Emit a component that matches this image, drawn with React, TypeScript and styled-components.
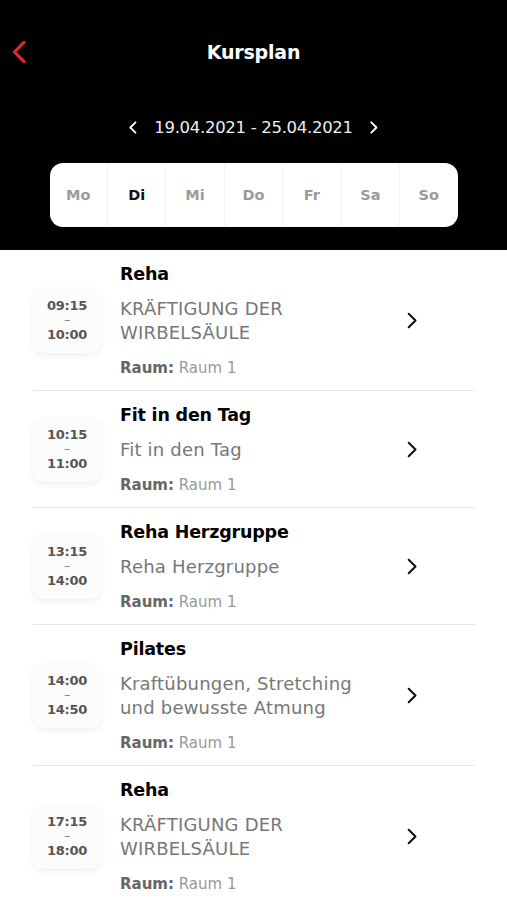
import React, { useState } from "react";
import styled, { createGlobalStyle } from "styled-components";

const GlobalStyle = createGlobalStyle`
  html, body {
    margin: 0;
    padding: 0;
    background: #ffffff;
  }
  body {
    font-family: "DejaVu Sans", "Open Sans", sans-serif;
  }
`;

const Page = styled.div`
  width: 507px;
  min-height: 900px;
  background: #ffffff;
  overflow: hidden;
`;

const Header = styled.header`
  background: #000000;
  height: 250px;
  box-sizing: border-box;
  padding-top: 36px;
  display: flex;
  flex-direction: column;
  align-items: center;
`;

const TopBar = styled.div`
  width: 100%;
  height: 32px;
  display: grid;
  grid-template-columns: 60px 1fr 60px;
  align-items: center;
`;

const BackButton = styled.button`
  background: none;
  border: none;
  padding: 0 0 0 12px;
  display: flex;
  align-items: center;
  cursor: pointer;
`;

const Title = styled.h1`
  margin: 0;
  text-align: center;
  color: #ffffff;
  font-size: 19px;
  font-weight: 700;
  letter-spacing: -0.2px;
`;

const WeekRow = styled.div`
  margin-top: 50px;
  display: flex;
  align-items: center;
  gap: 17px;
  color: #eeeeee;
`;

const WeekArrow = styled.button`
  background: none;
  border: none;
  padding: 0;
  display: flex;
  cursor: pointer;
`;

const WeekLabel = styled.span`
  font-size: 16.5px;
  font-weight: 400;
  letter-spacing: -0.3px;
`;

const DayBar = styled.div`
  margin-top: 26px;
  width: 408px;
  height: 64px;
  background: #ffffff;
  border-radius: 13px;
  display: flex;
  overflow: hidden;
`;

const Day = styled.button<{ $active?: boolean }>`
  flex: 1;
  border: none;
  background: transparent;
  border-left: 1px solid #f1f1f1;
  font-family: inherit;
  font-size: 14.5px;
  font-weight: 700;
  color: ${(p) => (p.$active ? "#111111" : "#9b9b9b")};
  cursor: pointer;

  &:first-child {
    border-left: none;
  }
`;

const List = styled.ul`
  list-style: none;
  margin: 0;
  padding: 0 32px 0 33px;
`;

const Row = styled.li`
  display: flex;
  align-items: center;
  border-bottom: 1px solid #e6e6e6;
  padding: 12px 0 11px;
`;

const TimeBox = styled.div`
  width: 68px;
  height: 64px;
  flex-shrink: 0;
  border-radius: 10px;
  background: #fcfcfc;
  box-shadow: 0 2px 6px rgba(0, 0, 0, 0.07);
  display: flex;
  flex-direction: column;
  align-items: center;
  justify-content: center;
  color: #555555;
  font-size: 13px;
  font-weight: 700;
  line-height: 14.5px;
  letter-spacing: -0.3px;
`;

const Dash = styled.span`
  color: #888888;
  font-weight: 400;
`;

const Body = styled.div`
  flex: 1;
  margin-left: 19px;
  display: flex;
  flex-direction: column;
`;

const CourseName = styled.div`
  font-size: 17.5px;
  line-height: 24px;
  font-weight: 700;
  color: #000000;
  letter-spacing: -0.2px;
`;

const CourseText = styled.div`
  margin-top: 11px;
  font-size: 18px;
  line-height: 24px;
  color: #777777;
  max-width: 250px;
  letter-spacing: 0.2px;
`;

const Room = styled.div`
  margin-top: 12px;
  font-size: 15px;
  line-height: 22px;
  color: #999999;

  b {
    color: #666666;
    font-weight: 700;
  }
`;

const Go = styled.div`
  width: 68px;
  flex-shrink: 0;
  display: flex;
  justify-content: flex-start;
`;

const Chevron = ({ dir, color, size, stroke }: { dir: "l" | "r"; color: string; size: number; stroke: number }) => (
  <svg width={size * 0.6} height={size} viewBox="0 0 12 20" fill="none">
    <path
      d={dir === "l" ? "M10 2 L2 10 L10 18" : "M2 2 L10 10 L2 18"}
      stroke={color}
      strokeWidth={stroke}
      strokeLinecap="round"
      strokeLinejoin="round"
    />
  </svg>
);

const days = ["Mo", "Di", "Mi", "Do", "Fr", "Sa", "So"];

const courses = [
  { from: "09:15", to: "10:00", name: "Reha", text: "KRÄFTIGUNG DER WIRBELSÄULE", room: "Raum 1" },
  { from: "10:15", to: "11:00", name: "Fit in den Tag", text: "Fit in den Tag", room: "Raum 1" },
  { from: "13:15", to: "14:00", name: "Reha Herzgruppe", text: "Reha Herzgruppe", room: "Raum 1" },
  { from: "14:00", to: "14:50", name: "Pilates", text: "Kraftübungen, Stretching und bewusste Atmung", room: "Raum 1" },
  { from: "17:15", to: "18:00", name: "Reha", text: "KRÄFTIGUNG DER WIRBELSÄULE", room: "Raum 1" },
];

export default function App() {
  const [day, setDay] = useState("Di");

  return (
    <Page>
      <GlobalStyle />
      <Header>
        <TopBar>
          <BackButton>
            <Chevron dir="l" color="#e3262b" size={24} stroke={2.6} />
          </BackButton>
          <Title>Kursplan</Title>
          <span />
        </TopBar>
        <WeekRow>
          <WeekArrow>
            <Chevron dir="l" color="#ffffff" size={13} stroke={2.8} />
          </WeekArrow>
          <WeekLabel>19.04.2021 - 25.04.2021</WeekLabel>
          <WeekArrow>
            <Chevron dir="r" color="#ffffff" size={13} stroke={2.8} />
          </WeekArrow>
        </WeekRow>
        <DayBar>
          {days.map((d) => (
            <Day key={d} $active={d === day} onClick={() => setDay(d)}>
              {d}
            </Day>
          ))}
        </DayBar>
      </Header>
      <List>
        {courses.map((c, i) => (
          <Row key={i}>
            <TimeBox>
              <span>{c.from}</span>
              <Dash>–</Dash>
              <span>{c.to}</span>
            </TimeBox>
            <Body>
              <CourseName>{c.name}</CourseName>
              <CourseText>{c.text}</CourseText>
              <Room>
                <b>Raum:</b> {c.room}
              </Room>
            </Body>
            <Go>
              <Chevron dir="r" color="#111111" size={17} stroke={2.4} />
            </Go>
          </Row>
        ))}
      </List>
    </Page>
  );
}
